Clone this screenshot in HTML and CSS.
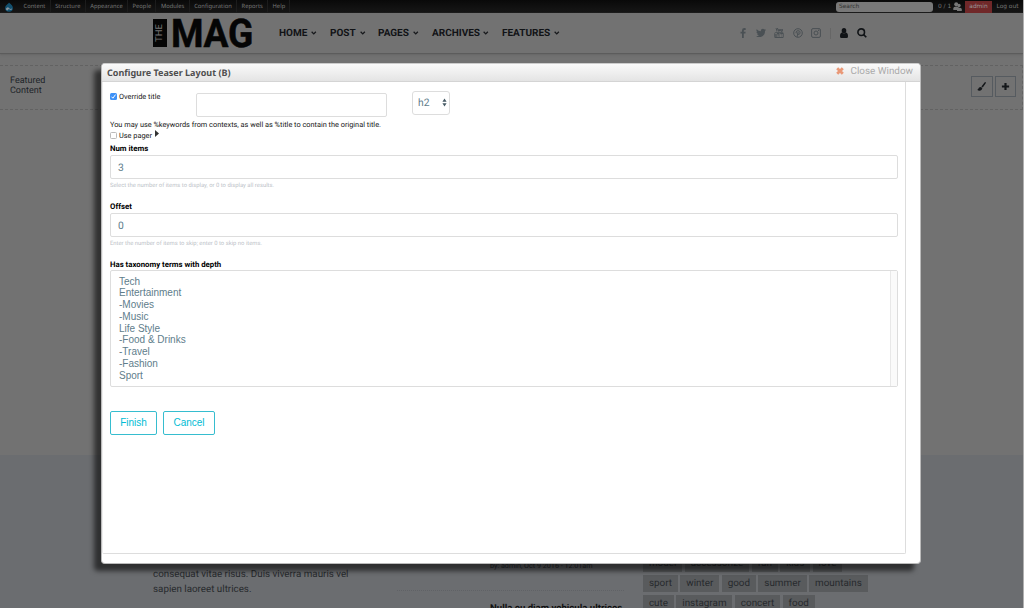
FILE: index.html
```html
<!DOCTYPE html>
<html lang="en">
<head>
<meta charset="utf-8">
<title>Configure Teaser Layout (B)</title>
<link rel="stylesheet" href="styles.css">
</head>
<body>
<div class="page">
  <div class="adminbar">
    <svg class="drop" viewBox="0 0 10 11"><path d="M5 .5C6 2 9.300 3.400 9.300 6.600A4.200 4 0 0 1 .7 6.600C.7 3.700 4 2.500 5 .5Z" fill="#12506f"/><path d="M1.500 7.500Q3.500 4.500 5 6.500T8.500 7Q8 9.500 6 8.300T3.500 9.300Q1.700 9.300 1.500 7.500Z" fill="#8796a0"/></svg>
    <ul class="adminmenu"><li>Content</li><li>Structure</li><li>Appearance</li><li>People</li><li>Modules</li><li>Configuration</li><li>Reports</li><li>Help</li></ul>
    <div class="adminsearch">Search</div>
    <span class="users">0 / 1</span>
    <svg class="usersicon" viewBox="0 0 9 9"><circle cx="3.200" cy="2.300" r="2"/><path d="M.3 8V6Q.5 4.400 3.200 4.400T6 6V8Z"/><circle cx="6" cy="3.500" r="1.700"/><path d="M4 9V7Q4.300 5.700 6.300 5.700T8.800 7V9Z"/></svg>
    <span class="adminuser">admin</span>
    <span class="logout">Log out</span>
  </div>
  <header class="header">
    <div class="logo"><span class="the"><span>THE</span></span><span class="mag">MAG</span></div>
    <nav class="nav">
      <a class="n1">HOME<svg viewBox="0 0 6 4"><path d="M.7.7 3 3 5.300.7"/></svg></a>
      <a class="n2">POST<svg viewBox="0 0 6 4"><path d="M.7.7 3 3 5.300.7"/></svg></a>
      <a class="n3">PAGES<svg viewBox="0 0 6 4"><path d="M.7.7 3 3 5.300.7"/></svg></a>
      <a class="n4">ARCHIVES<svg viewBox="0 0 6 4"><path d="M.7.7 3 3 5.300.7"/></svg></a>
      <a class="n5">FEATURES<svg viewBox="0 0 6 4"><path d="M.7.7 3 3 5.300.7"/></svg></a>
    </nav>
    <div class="social">
      <svg viewBox="0 0 10 10"><path d="M7.700.2V1.900H6.700Q5.800 1.900 5.800 2.700V3.800H7.600L7.400 5.400H5.800V10H4V5.400H2.500V3.800H4V2.500Q4 .1 6.400.1Z"/></svg>
      <svg viewBox="0 0 10 10"><path d="M10 2Q9.500 2.700 9 3C9.100 6.600 6.500 9.100 3.200 9.100Q1.300 9.100 0 8.200Q1.800 8.300 3 7.300Q1.600 7.200 1.100 5.900H2Q.4 5.400.4 3.800L1.300 4Q-.2 2.700.7 1.200Q2.400 3.200 4.900 3.300C4.500 1 7 .1 8.400 1.500L9.700 1Q9.500 1.700 8.800 2.200Z"/></svg>
      <svg viewBox="0 0 10 10"><path d="M2 .1 2.800 2.100V3.500M3.700.1 2.800 2.100M4.400 1.500V3Q5.100 4 5.500 3V1.500Q5 .8 4.400 1.500M6.700 1V3Q7.300 3.900 8.100 3V1V3.600" class="line"/><path fill-rule="evenodd" d="M1.500 4.300H8.500Q9.700 4.300 9.700 6V8.500Q9.700 10 8.500 10H1.500Q.3 10 .3 8.500V6Q.3 4.300 1.500 4.300ZM1 5.100V5.800H1.700V9H2.400V5.800H3V5.100ZM3.200 6.200V9H5.100V6.200H4.500V8.400H3.900V6.200ZM5.500 5.100V9H7.200V6.200H6.200V5.100ZM7.500 6.200V9H9V8.200H8.100V7.700H9V6.200Z"/></svg>
      <svg viewBox="0 0 10 10"><circle cx="5" cy="5" r="4.300" class="line"/><path d="M3.200 5.300C2.200 2 7.500 1.800 7 4.700S4.700 6.500 4.800 5.400M5.200 3.800 4 9" class="line"/></svg>
      <svg viewBox="0 0 10 10"><rect x=".6" y=".6" width="8.800" height="8.800" rx="1.400" class="line"/><circle cx="5" cy="5" r="2" class="line"/><rect x="7" y="1.700" width="1.200" height="1.200"/></svg>
    </div>
    <i class="bar"></i>
    <svg class="person" viewBox="0 0 8 10"><ellipse cx="4" cy="2.700" rx="2.300" ry="2.700"/><path d="M1.900 4.600Q4 6.500 6.100 4.600Q8 5 8 8.500Q8 10 6.500 10H1.500Q0 10 0 8.500Q0 5 1.900 4.600Z"/></svg>
    <svg class="find" viewBox="0 0 10 10"><circle cx="4.200" cy="4.200" r="3.300"/><path d="M6.600 6.600 9.300 9.300"/></svg>
  </header>
  <section class="featured">
    <div class="region">Featured<br>Content</div>
    <div class="tools">
      <span><svg viewBox="0 0 10 10"><path d="M9.600.2Q10.200.6 9.700 1.500L6.400 6.200 4.900 5 8.600.4Q9.100-.1 9.600.2ZM4.300 5.500 5.900 6.800C5.800 9.500 2.500 10.800.1 8.600Q1 8.700 1.300 7.700Q1.800 5.500 4.300 5.500Z"/></svg></span>
      <span><svg viewBox="0 0 10 10"><path d="M3.800 1H6.200V3.800H9V6.200H6.200V9H3.800V6.200H1V3.800H3.800Z"/></svg></span>
    </div>
  </section>
  <div class="blank"></div>
  <footer class="footer">
    <p class="about">consequat vitae risus. Duis viverra mauris vel<br>sapien laoreet ultrices.</p>
    <div class="posts"><div class="byline">by: admin, Oct 9 2016 - 12:01am</div><div class="posttitle">Nulla eu diam vehicula ultrices</div></div>
    <div class="tags">
      <div><span>model</span><span>accessorize</span><span>fun</span><span>kids</span><span>love</span></div>
      <div><span>sport</span><span>winter</span><span>good</span><span>summer</span><span>mountains</span></div>
      <div><span>cute</span><span>instagram</span><span>concert</span><span>food</span></div>
    </div>
  </footer>
</div>
<main class="modal">
  <div class="modalhead"><h1>Configure Teaser Layout (B)</h1><a class="close"><svg viewBox="0 0 8 8"><path d="M1.200 1.200 6.800 6.800M6.800 1.200 1.200 6.800"/></svg>Close Window</a></div>
  <form class="form">
    <div class="toprow">
      <label class="check"><i class="box on"><svg viewBox="0 0 7 7"><path d="M1.500 3.700 2.900 5.200 5.500 1.600"/></svg></i>Override title</label>
      <div class="titleinput"></div>
      <div class="select">h2<svg viewBox="0 0 6 10"><path d="M.5 4 3 .3 5.500 4ZM.5 6 3 9.700 5.500 6Z"/></svg></div>
    </div>
    <p class="note">You may use %keywords from contexts, as well as %title to contain the original title.</p>
    <label class="check pager"><i class="box"></i>Use pager<svg class="tri" viewBox="0 0 4 7"><path d="M0 0 4 3.500 0 7Z"/></svg></label>
    <div class="label first">Num items</div>
    <div class="field">3</div>
    <p class="hint">Select the number of items to display, or 0 to display all results.</p>
    <div class="label">Offset</div>
    <div class="field">0</div>
    <p class="hint">Enter the number of items to skip; enter 0 to skip no items.</p>
    <div class="label last">Has taxonomy terms with depth</div>
    <div class="list"><ul><li>Tech</li><li>Entertainment</li><li>-Movies</li><li>-Music</li><li>Life Style</li><li>-Food &amp; Drinks</li><li>-Travel</li><li>-Fashion</li><li>Sport</li></ul><i class="track"></i></div>
    <div class="buttons"><span class="finish">Finish</span><span class="cancel">Cancel</span></div>
  </form>
</main>
</body>
</html>
```
FILE: styles.css
```css
* { box-sizing: border-box; }
body { margin: 0; font-family: Roboto, sans-serif; width: 1024px; height: 608px; overflow: hidden; position: relative; text-rendering: geometricPrecision; }
p, ul, h1 { margin: 0; padding: 0; list-style: none; font-weight: 400; }
svg { display: block; flex: none; overflow: visible; }
.page { width: 1024px; height: 608px; background: #727272; overflow: hidden; border-right: 1px solid #b0b0b0; }

.adminbar { display: flex; align-items: center; height: 13px; background: linear-gradient(#090909, #171717); color: #777; font: 5.9px "DejaVu Sans", sans-serif; padding-left: 4px; white-space: nowrap; }
.drop { width: 10px; height: 10px; margin-right: 5px; }
.adminmenu { display: flex; height: 13px; width: 817px; font-family: "Noto Sans", sans-serif; font-size: 5.8px; line-height: 13px; }
.adminmenu li { padding: 0 4.200px 0 4.600px; border-right: 1px solid #1c1c1c; }
.adminsearch { width: 97px; height: 10px; border-radius: 3px; background: #787878; color: #333; padding-left: 3px; line-height: 10px; flex: none; }
.users { margin-left: 5px; width: 14px; flex: none; }
.usersicon { width: 9px; height: 9px; fill: #777; margin: 0 3px 0 1px; }
.adminuser { width: 27px; height: 12px; line-height: 12px; background: #702829; color: #999; text-align: center; flex: none; }
.logout { width: 31px; text-align: center; flex: none; }

.header { display: flex; align-items: center; height: 41px; padding: 0 0 0 153px; border-bottom: 1px solid #5c5c5c; box-shadow: 0 1px 2px #666; }
.logo { display: flex; width: 126px; height: 28px; flex: none; color: #050505; }
.the { width: 14px; height: 28px; background: #050505; color: #777; display: flex; align-items: center; justify-content: center; }
.the span { transform: rotate(-90deg); font-size: 9.5px; line-height: 12px; }
.mag { margin-left: 4px; font-size: 39.5px; line-height: 29px; font-weight: 700; transform: scaleX(.94); transform-origin: left; letter-spacing: -.3px; -webkit-text-stroke: .5px #050505; }
.nav { display: flex; width: 460px; flex: none; color: #111316; font-size: 10px; font-weight: 700; }
.nav a { display: flex; align-items: center; justify-content: space-between; flex: none; white-space: nowrap; }
.nav svg { width: 5.500px; height: 4px; fill: none; stroke: #17191c; stroke-width: 1.4; }
.n1 { width: 37px; margin-right: 14px; }
.n2 { width: 35px; margin-right: 13px; }
.n3 { width: 40px; margin-right: 14px; }
.n4 { width: 56px; margin-right: 14px; }
.n5 { width: 57px; }
.social { display: flex; gap: 8.2px; flex: none; margin-left: -1px; }
.social svg { width: 10px; height: 10px; fill: #4a5054; }
.social .line { fill: none; stroke: #4a5054; stroke-width: 1; }
.bar { width: 1px; height: 11px; background: #666; margin-left: 9px; }
.person { width: 8px; height: 10px; margin-left: 9px; fill: #101316; }
.find { width: 10px; height: 10px; margin-left: 9px; fill: none; stroke: #101316; stroke-width: 1.6; }

.featured { margin-top: 11px; height: 45px; width: 1023px; border: 1px dashed #626262; border-left: 0; display: flex; justify-content: space-between; padding: 10px 6px 0 10px; }
.region { color: #202429; font-size: 9px; line-height: 10px; }
.tools { display: flex; gap: 2px; }
.tools span { width: 21.5px; height: 21px; border: 1px solid #565b60; display: flex; align-items: center; justify-content: center; }
.tools svg { width: 9px; height: 9px; fill: #14171a; }
.blank { height: 345px; }

.footer { height: 153px; background: #6b6d70; padding: 99px 0 0 153px; display: flex; color: #272a2d; white-space: nowrap; overflow: hidden; }
.about { font-size: 9.8px; line-height: 15px; padding-top: 13px; width: 244px; flex: none; }
.posts { width: 227px; padding-top: 6px; margin-right: 19px; flex: none; }
.byline { padding-left: 93px; font-size: 7.2px; line-height: 12px; color: #292c30; height: 31px; border-bottom: 1px dotted #606266; }
.posttitle { padding: 11px 0 0 93px; font-size: 9.6px; line-height: 13px; font-weight: 700; color: #111; }
.tags { padding-top: 1px; font-size: 9.9px; }
.tags > div { display: flex; gap: 2.500px; margin-bottom: 3px; }
.tags span { height: 17px; line-height: 17px; padding: 0 5.900px; background: #595b5d; }

.modal { position: absolute; left: 101px; top: 63px; width: 820px; height: 501px; background: #fff; border: 1px solid #bbb; border-top-color: #ccc; border-radius: 4px; box-shadow: -7px 7px 5px rgba(0, 0, 0, .57); color: #151515; }
.modalhead { height: 18px; border-bottom: 1px solid #d4d4d4; border-radius: 3px 3px 0 0; background: linear-gradient(#fafafa, #e4e4e4); display: flex; justify-content: space-between; padding: 0 7px 0 5px; }
.modalhead h1 { font: 700 9px/17px "Noto Sans", sans-serif; color: #4f4f4f; white-space: nowrap; }
.close { display: flex; align-items: center; height: 14px; font-size: 9.9px; color: #aaa; white-space: nowrap; }
.close svg { width: 8px; height: 8px; margin-right: 7px; stroke: #e99877; stroke-width: 2.8; }
.form { width: 804px; height: 472px; border: 1px solid #ddd; border-top: 0; border-left-color: #eee; border-radius: 0 0 2px 2px; padding: 9px 7px 0; }
.toprow { display: flex; height: 28px; }
.check { display: flex; align-items: center; height: 11px; font-size: 7.35px; white-space: nowrap; }
.pager { height: 12px; }
.box { width: 7px; height: 7px; border: 1px solid #bbb; border-radius: 1.500px; margin-right: 2px; }
.on { background: #3d91f7; border: 0; }
.on svg { width: 7px; height: 7px; fill: none; stroke: #fff; }
.toprow .check { width: 85.500px; flex: none; }
.titleinput { width: 191px; height: 24px; border: 1px solid #ddd; border-radius: 2px; margin-top: 2px; }
.select { width: 38px; height: 24px; border: 1px solid #ddd; border-radius: 3px; margin-left: 25.500px; display: flex; align-items: center; justify-content: space-between; padding: 0 2px 2px 5px; color: #607d8b; font-size: 10.3px; }
.select svg { width: 5px; height: 9px; fill: #455a64; margin-top: 1px; }
.note { font-size: 7.35px; line-height: 11px; height: 10px; white-space: nowrap; }
.tri { width: 4px; height: 7px; margin: -4px 0 0 3px; fill: #333; }
.label { font-size: 7.8px; font-weight: 700; line-height: 11px; color: #000; height: 12px; }
.label.first { padding-top: 2px; height: 14px; }
.label.last { height: 10px; line-height: 10px; }
.field { height: 24px; border: 1px solid #ddd; border-radius: 2px; padding-left: 7px; line-height: 24px; font-size: 10.300px; color: #607d8b; }
.hint { font-size: 5.88px; line-height: 14px; color: #bcc2c8; height: 22.300px; white-space: nowrap; }
.list { display: flex; height: 117px; border: 1px solid #ddd; border-radius: 2px; justify-content: space-between; }
.list ul { padding: 5px 8px; font: 10px/11.750px "Liberation Sans", Arial, sans-serif; color: #607d8b; text-rendering: auto; }
.track { width: 7px; border-left: 1px solid #e8e8e8; background: #fafafa; }
.buttons { display: flex; gap: 6px; margin-top: 24px; font: 10px/22px "Liberation Sans", Arial, sans-serif; color: #00bcd4; text-align: center; text-rendering: auto; }
.buttons span { height: 24px; border: 1px solid #36bdcf; border-radius: 2px; }
.finish { width: 47px; }
.cancel { width: 52px; }
```
